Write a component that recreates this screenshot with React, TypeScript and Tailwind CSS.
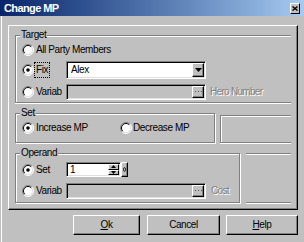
import React from "react";

function Radio({ checked = false }: { checked?: boolean }) {
  return (
    <svg width="12" height="12" viewBox="0 0 12 12" className="shrink-0">
      <circle cx="6" cy="6" r="5" fill="#fff" />
      <path d="M9.9 2.1 A5.5 5.5 0 0 0 2.1 9.9" stroke="#808080" fill="none" />
      <path d="M2.1 9.9 A5.5 5.5 0 0 0 9.9 2.1" stroke="#fff" fill="none" />
      <path d="M9.2 2.8 A4.5 4.5 0 0 0 2.8 9.2" stroke="#000" fill="none" />
      <path d="M2.8 9.2 A4.5 4.5 0 0 0 9.2 2.8" stroke="#dfdfdf" fill="none" />
      {checked && <circle cx="6" cy="6" r="1.8" fill="#000" />}
    </svg>
  );
}

function Group({
  label,
  className,
  children,
}: {
  label?: string;
  className: string;
  children?: React.ReactNode;
}) {
  return (
    <div className={"relative border-[#808080] " + className}>
      {label && (
        <span className="absolute -top-[7px] left-[4px] bg-[#c0c0c0] px-[1px] leading-[12px]">
          {label}
        </span>
      )}
      {children}
    </div>
  );
}

function DotsButton() {
  return (
    <div className="w-[12px] h-full flex items-center justify-center bg-[#c0c0c0] border border-t-white border-l-white border-r-black border-b-black shadow-[inset_-1px_-1px_0_#808080]">
      <svg width="7" height="2" viewBox="0 0 7 2">
        <rect x="0" y="0" width="1" height="1" fill="#505050" />
        <rect x="3" y="0" width="1" height="1" fill="#505050" />
        <rect x="6" y="0" width="1" height="1" fill="#505050" />
      </svg>
    </div>
  );
}

function DisabledField() {
  return (
    <div className="w-[140px] h-[16px] flex p-[1px] bg-[#c0c0c0] border border-t-[#808080] border-l-[#808080] border-r-white border-b-white shadow-[inset_1px_1px_0_#000,inset_-1px_-1px_0_#dfdfdf]">
      <div className="flex-1" />
      <DotsButton />
    </div>
  );
}

export default function App() {
  return (
    <div className="w-[304px] h-[242px] bg-[#c0c0c0] flex flex-col overflow-hidden font-['Liberation_Sans',Arial,sans-serif] text-[10px] tracking-[-0.4px] text-black leading-none">
      {/* Title bar */}
      <div className="h-[16px] shrink-0 flex items-center bg-linear-to-r from-[#0a246a] to-[#a6caf0] pl-[4px] pr-[4px]">
        <span className="flex-1 text-white font-bold text-[11px] tracking-[-0.6px]">
          Change MP
        </span>
        <div className="w-[10px] h-[11px] flex items-center justify-center bg-[#c0c0c0] border border-t-white border-l-white border-r-black border-b-black">
          <svg width="6" height="5" viewBox="0 0 6 5">
            <path d="M0.5 0.5 L5.5 4.5 M5.5 0.5 L0.5 4.5" stroke="#000" strokeWidth="1.4" />
          </svg>
        </div>
      </div>

      {/* Body */}
      <div className="flex-1 pl-[1px]">
        <div className="h-full border-l border-white pl-[6px] pt-[9px] flex flex-col">
          {/* Main panel */}
          <div className="w-[290px] flex flex-col pl-[6px] pr-[6px] pt-[9px] pb-[6px] border border-t-white border-l-white border-r-black border-b-black shadow-[inset_-1px_-1px_0_#808080]">
            {/* Target */}
            <Group
              label="Target"
              className="w-[276px] h-[68px] border border-r-0 shadow-[inset_1px_1px_0_#fff,0_1px_0_#fff] flex flex-col pt-[7px]"
            >
              <div className="h-[14px] flex items-center pl-[6px]">
                <Radio />
                <span className="ml-[2px]">All Party Members</span>
              </div>
              <div className="mt-[4px] h-[18px] flex items-center pl-[6px]">
                <div className="w-[44px] flex items-center">
                  <Radio checked />
                  <span className="border border-dotted border-black px-[1px] py-[2px] leading-[10px]">
                    Fix
                  </span>
                </div>
                <div className="w-[140px] h-[18px] flex p-[1px] bg-white border border-t-[#808080] border-l-[#808080] border-r-white border-b-white shadow-[inset_1px_1px_0_#000,inset_-1px_-1px_0_#dfdfdf]">
                  <div className="flex-1 flex items-center pl-[3px]">Alex</div>
                  <div className="w-[12px] h-full flex items-center justify-center bg-[#c0c0c0] border border-t-white border-l-white border-r-black border-b-black shadow-[inset_-1px_-1px_0_#808080]">
                    <svg width="7" height="4" viewBox="0 0 7 4">
                      <path d="M0 0 H7 L3.5 4 Z" fill="#000" />
                    </svg>
                  </div>
                </div>
              </div>
              <div className="mt-[5px] h-[16px] flex items-center pl-[6px]">
                <div className="w-[44px] flex items-center">
                  <Radio />
                  <span className="ml-[2px]">Variab</span>
                </div>
                <DisabledField />
                <span className="ml-[4px] tracking-[-0.7px] text-[#808080] [text-shadow:1px_1px_0_#fff]">
                  Hero Number
                </span>
              </div>
            </Group>

            {/* Set */}
            <div className="mt-[10px] flex">
              <Group
                label="Set"
                className="w-[200px] h-[30px] border shadow-[inset_1px_1px_0_#fff,1px_1px_0_#fff] flex items-center pl-[6px]"
              >
                <div className="w-[98px] flex items-center">
                  <Radio checked />
                  <span className="ml-[2px]">Increase MP</span>
                </div>
                <div className="flex items-center">
                  <Radio />
                  <span className="ml-[1px]">Decrease MP</span>
                </div>
              </Group>
              <Group className="ml-[5px] mt-[2px] h-[28px] flex-1 border border-r-0 shadow-[inset_1px_1px_0_#fff,0_1px_0_#fff]" />
            </div>

            {/* Operand */}
            <div className="mt-[10px] flex">
              <Group
                label="Operand"
                className="w-[225px] h-[50px] border shadow-[inset_1px_1px_0_#fff,1px_1px_0_#fff] flex flex-col pt-[8px]"
              >
                <div className="h-[15px] flex items-center pl-[6px]">
                  <div className="w-[44px] flex items-center">
                    <Radio checked />
                    <span className="ml-[2px]">Set</span>
                  </div>
                  <div className="w-[55px] h-[15px] flex p-[1px] bg-white border border-t-[#808080] border-l-[#808080] border-r-white border-b-white shadow-[inset_1px_1px_0_#000,inset_-1px_-1px_0_#dfdfdf]">
                    <div className="flex-1 flex items-center pl-[2px]">1</div>
                    <div className="w-[11px] flex flex-col">
                      <div className="flex-1 flex items-center justify-center bg-[#c0c0c0] border border-t-white border-l-white border-r-black border-b-black">
                        <svg width="5" height="3" viewBox="0 0 5 3">
                          <path d="M0 3 H5 L2.5 0 Z" fill="#000" />
                        </svg>
                      </div>
                      <div className="flex-1 flex items-center justify-center bg-[#c0c0c0] border border-t-white border-l-white border-r-black border-b-black">
                        <svg width="5" height="3" viewBox="0 0 5 3">
                          <path d="M0 0 H5 L2.5 3 Z" fill="#000" />
                        </svg>
                      </div>
                    </div>
                  </div>
                  <div className="w-[7px] h-[15px] flex items-center justify-center bg-[#c0c0c0] border border-t-white border-l-white border-r-black border-b-black shadow-[inset_-1px_-1px_0_#808080]">
                    <svg width="3" height="5" viewBox="0 0 3 5">
                      <ellipse cx="1.5" cy="2.5" rx="1" ry="2" stroke="#000" strokeWidth="0.8" fill="none" />
                    </svg>
                  </div>
                </div>
                <div className="mt-[6px] h-[16px] flex items-center pl-[6px]">
                  <div className="w-[44px] flex items-center">
                    <Radio />
                    <span className="ml-[2px]">Variab</span>
                  </div>
                  <DisabledField />
                  <span className="ml-[5px] tracking-[-0.7px] text-[#808080] [text-shadow:1px_1px_0_#fff]">
                    Cost
                  </span>
                </div>
              </Group>
              <div className="ml-[6px] h-[50px] flex-1 border-y border-[#808080] shadow-[inset_0_1px_0_#fff,0_1px_0_#fff]" />
            </div>
          </div>

          {/* Buttons */}
          <div className="mt-[5px] h-[20px] flex pl-[65px]">
            <button className="w-[67px] h-[20px] flex items-center justify-center bg-[#c0c0c0] border border-t-white border-l-white border-r-black border-b-black shadow-[inset_-1px_-1px_0_#808080]">
              <span>
                <span className="underline underline-offset-1">O</span>k
              </span>
            </button>
            <button className="ml-[7px] w-[73px] h-[20px] flex items-center justify-center bg-[#c0c0c0] border border-t-white border-l-white border-r-black border-b-black shadow-[inset_-1px_-1px_0_#808080]">
              Cancel
            </button>
            <button className="ml-[6px] w-[72px] h-[20px] flex items-center justify-center bg-[#c0c0c0] border border-t-white border-l-white border-r-black border-b-black shadow-[inset_-1px_-1px_0_#808080]">
              <span>
                <span className="underline underline-offset-1">H</span>elp
              </span>
            </button>
          </div>
        </div>
      </div>
    </div>
  );
}
